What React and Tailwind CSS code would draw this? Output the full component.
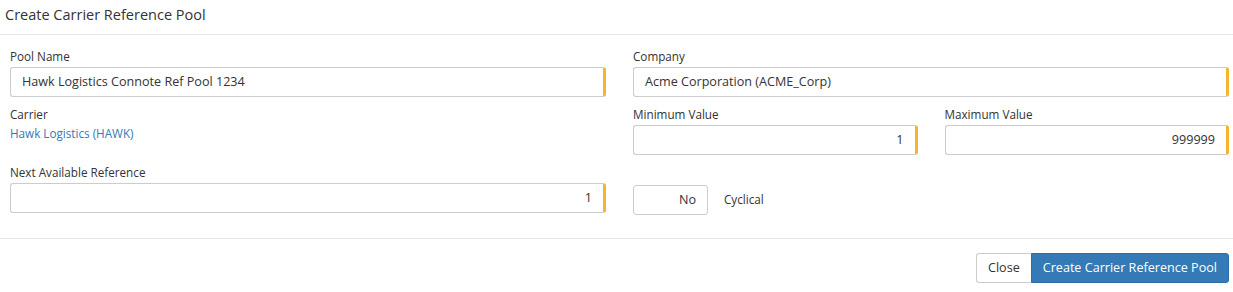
// Create Carrier Reference Pool modal

const Field = ({ label, value, right, className = '' }) => (
	<div className={className}>
		<div className="h-[16px] leading-[16px] text-[11.7px] text-[#333] mb-[3px]">{label}</div>
		<div
			className={`h-[30px] border border-[#ccc] border-r-[3px] border-r-[#f5b52e] rounded-[3px] bg-white flex items-center px-[11px] text-[12.6px] text-[#333] ${right ? 'justify-end' : ''}`}
		>
			{value}
		</div>
	</div>
);

export default function App() {
	return (
		<div className="w-[1233px] h-[292px] bg-white font-['Open_Sans',sans-serif] text-[#333]">
			{/* Header */}
			<div className="h-[35px] border-b border-[#e5e5e5] px-[5px] flex items-center">
				<h4 className="text-[14.5px] leading-[20px] -mt-[5px]">Create Carrier Reference Pool</h4>
			</div>

			{/* Body */}
			<div className="grid grid-cols-2 gap-x-[27px] pl-[10px] pr-[4px] pt-[13px] h-[204px] border-b border-[#e5e5e5]">
				{/* Left column */}
				<div>
					<Field label="Pool Name" value="Hawk Logistics Connote Ref Pool 1234" />
					<div className="mt-[9px]">
						<div className="h-[16px] leading-[16px] text-[11.7px]">Carrier</div>
						<a href="#" className="block mt-[3px] h-[16px] leading-[16px] text-[11.7px] text-[#337ab7]">
							Hawk Logistics (HAWK)
						</a>
					</div>
					<Field className="mt-[23px]" label="Next Available Reference" value="1" right />
				</div>

				{/* Right column */}
				<div>
					<Field label="Company" value="Acme Corporation (ACME_Corp)" />
					<div className="grid grid-cols-2 gap-x-[27px] mt-[9px]">
						<Field label="Minimum Value" value="1" right />
						<Field label="Maximum Value" value="999999" right />
					</div>
					<div className="flex items-center mt-[30px]">
						<div className="w-[75px] h-[30px] border border-[#ccc] rounded-[3px] flex items-center justify-end pr-[11px] text-[12.6px]">
							No
						</div>
						<span className="ml-[16px] text-[11.7px]">Cyclical</span>
					</div>
				</div>
			</div>

			{/* Footer */}
			<div className="flex justify-end px-[4px] pt-[14px]">
				<button className="h-[30px] px-[11px] border border-[#ccc] border-r-0 rounded-l-[3px] bg-white text-[12.6px] text-[#333]">
					Close
				</button>
				<button className="h-[30px] px-[11px] border border-[#2e6da4] rounded-r-[3px] bg-[#337ab7] text-[12.6px] text-white">
					Create Carrier Reference Pool
				</button>
			</div>
		</div>
	);
}
